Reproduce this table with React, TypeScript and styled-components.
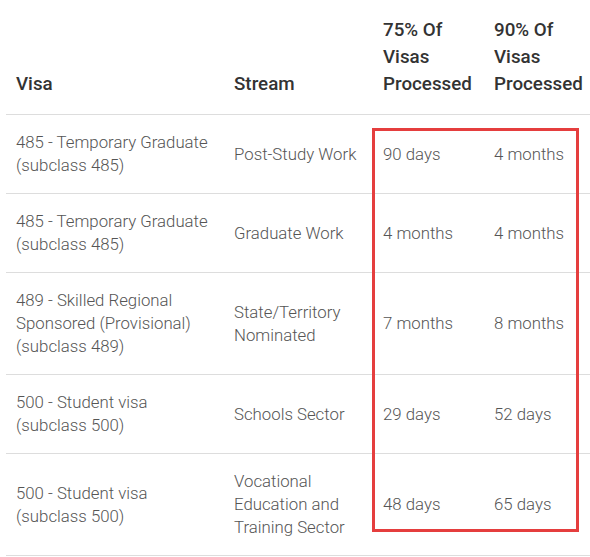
import styled, { createGlobalStyle } from "styled-components";

const Global = createGlobalStyle`
  body {
    margin: 0;
    background: #fff;
    font-family: Roboto, "Liberation Sans", sans-serif;
  }
`;

const Wrap = styled.div`
  position: relative;
  padding-left: 6px;
  width: 590px;
  box-sizing: border-box;
`;

const Table = styled.table`
  width: 584px;
  border-collapse: collapse;
  table-layout: fixed;
`;

const Head = styled.th`
  text-align: left;
  vertical-align: bottom;
  font-weight: 500;
  font-size: 18.8px;
  line-height: 27px;
  color: #333;
  padding: 17px 4px 16px 10px;
  border-bottom: 1px solid #ddd;
`;

const Cell = styled.td`
  vertical-align: middle;
  font-weight: 300;
  font-size: 16.8px;
  line-height: 23px;
  color: #555;
  padding: 16px 4px 16px 10px;
  border-bottom: 1px solid #ddd;
`;

const Highlight = styled.div`
  position: absolute;
  left: 372px;
  top: 128px;
  width: 207px;
  height: 404px;
  box-sizing: border-box;
  border: 3px solid #e53e3e;
  pointer-events: none;
`;

const widths = [218, 149, 111, 106];

const rows = [
  ["485 - Temporary Graduate (subclass 485)", "Post-Study Work", "90 days", "4 months"],
  ["485 - Temporary Graduate (subclass 485)", "Graduate Work", "4 months", "4 months"],
  ["489 - Skilled Regional Sponsored (Provisional) (subclass 489)", "State/Territory Nominated", "7 months", "8 months"],
  ["500 - Student visa (subclass 500)", "Schools Sector", "29 days", "52 days"],
  ["500 - Student visa (subclass 500)", "Vocational Education and Training Sector", "48 days", "65 days"],
];

export default function App() {
  return (
    <>
      <Global />
      <Wrap>
        <Table>
          <colgroup>
            {widths.map((w, i) => (
              <col key={i} style={{ width: w }} />
            ))}
          </colgroup>
          <thead>
            <tr>
              <Head>Visa</Head>
              <Head>Stream</Head>
              <Head>75% Of Visas Processed</Head>
              <Head>90% Of Visas Processed</Head>
            </tr>
          </thead>
          <tbody>
            {rows.map((r, i) => (
              <tr key={i}>
                {r.map((c, j) => (
                  <Cell key={j}>{c}</Cell>
                ))}
              </tr>
            ))}
          </tbody>
        </Table>
        <Highlight />
      </Wrap>
    </>
  );
}
